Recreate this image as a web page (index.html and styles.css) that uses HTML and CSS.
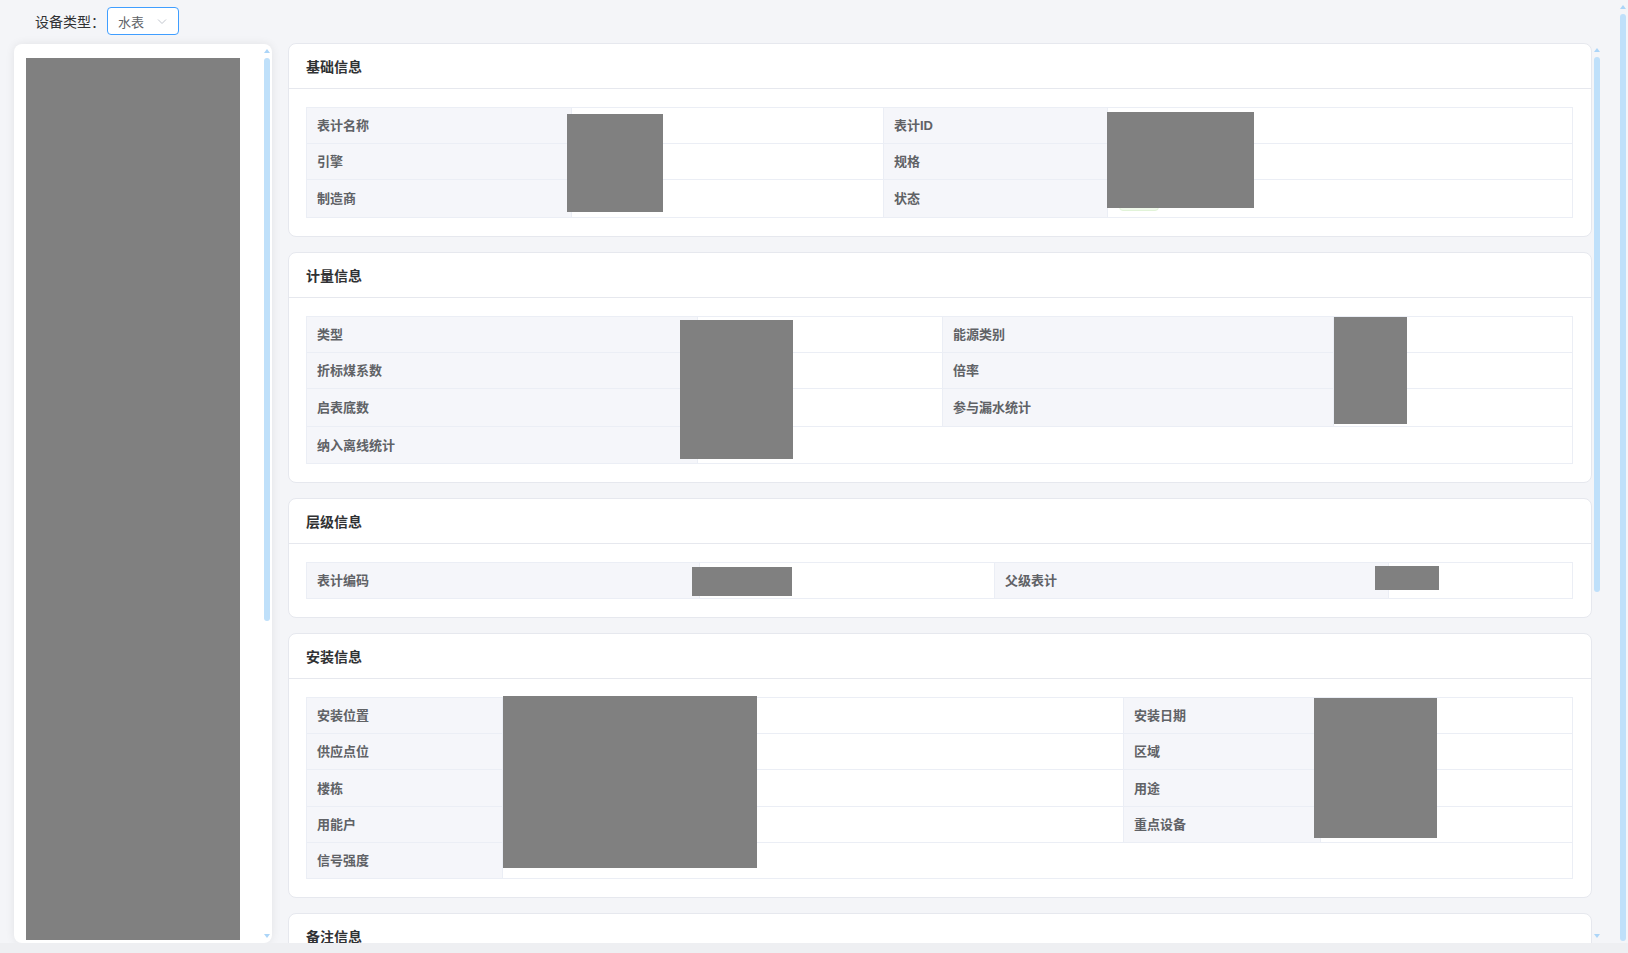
FILE: index.html
```html
<!DOCTYPE html>
<html lang="zh-CN">
<head>
<meta charset="utf-8">
<title>设备详情</title>
<link rel="stylesheet" href="styles.css">
</head>
<body>
<div class="app">
  <div class="page">
    <div class="toolbar">
      <span class="toolbar-label">设备类型：</span>
      <div class="select">
        <span class="select-value">水表</span>
        <svg class="select-arrow" width="10" height="6" viewBox="0 0 10 6"><polyline points="1,0.5 5,4.5 9,0.5" fill="none" stroke="#c0c4cc" stroke-width="1"/></svg>
      </div>
    </div>
    <div class="main">
      <aside class="tree-panel">
        <div class="tree">
          <div class="redact-block"></div>
        </div>
        <div class="scrollbar">
          <span class="sb-up"></span>
          <span class="sb-thumb thumb-tree"></span>
          <span class="sb-fill"></span>
          <span class="sb-down"></span>
        </div>
      </aside>
      <section class="content">
        <div class="cards">
          <div class="card">
            <div class="card-header">基础信息</div>
            <div class="card-body">
              <div class="desc desc-basic">
                <div class="label">表计名称</div><div class="value"></div>
                <div class="label">表计ID</div><div class="value"></div>
                <div class="label">引擎</div><div class="value"></div>
                <div class="label">规格</div><div class="value"></div>
                <div class="label">制造商</div><div class="value"></div>
                <div class="label">状态</div><div class="value"><span class="tag tag-success">正常</span></div>
              </div>
            </div>
            <div class="redact r-a"></div>
            <div class="redact r-b"></div>
          </div>

          <div class="card">
            <div class="card-header">计量信息</div>
            <div class="card-body">
              <div class="desc desc-measure">
                <div class="label">类型</div><div class="value"></div>
                <div class="label">能源类别</div><div class="value"></div>
                <div class="label">折标煤系数</div><div class="value"></div>
                <div class="label">倍率</div><div class="value"></div>
                <div class="label">启表底数</div><div class="value"></div>
                <div class="label">参与漏水统计</div><div class="value"></div>
                <div class="label">纳入离线统计</div><div class="value span3"></div>
              </div>
            </div>
            <div class="redact r-c"></div>
            <div class="redact r-d"></div>
          </div>

          <div class="card">
            <div class="card-header">层级信息</div>
            <div class="card-body">
              <div class="desc desc-level">
                <div class="label">表计编码</div><div class="value"></div>
                <div class="label">父级表计</div><div class="value"></div>
              </div>
            </div>
            <div class="redact r-e"></div>
            <div class="redact r-f"></div>
          </div>

          <div class="card">
            <div class="card-header">安装信息</div>
            <div class="card-body">
              <div class="desc desc-install">
                <div class="label">安装位置</div><div class="value"></div>
                <div class="label">安装日期</div><div class="value"></div>
                <div class="label">供应点位</div><div class="value"></div>
                <div class="label">区域</div><div class="value"></div>
                <div class="label">楼栋</div><div class="value"></div>
                <div class="label">用途</div><div class="value"></div>
                <div class="label">用能户</div><div class="value"></div>
                <div class="label">重点设备</div><div class="value"></div>
                <div class="label">信号强度</div><div class="value span3"></div>
              </div>
            </div>
            <div class="redact r-g"></div>
            <div class="redact r-h"></div>
          </div>

          <div class="card">
            <div class="card-header">备注信息</div>
            <div class="card-body">
              <div class="desc desc-remark">
                <div class="label">备注</div><div class="value"></div>
              </div>
            </div>
          </div>
        </div>
        <div class="scrollbar">
          <span class="sb-up"></span>
          <span class="sb-thumb thumb-content"></span>
          <span class="sb-fill"></span>
          <span class="sb-down"></span>
        </div>
      </section>
    </div>
  </div>
  <div class="scrollbar page-scrollbar">
    <span class="sb-up"></span>
    <span class="sb-thumb thumb-page"></span>
  </div>
</div>
</body>
</html>
```

FILE: styles.css
```css
html, body {
  margin: 0;
  padding: 0;
}

body {
  background: #eeeff2;
  overflow: hidden;
  font-family: "Liberation Sans", "Noto Sans CJK SC", sans-serif;
  color: #303133;
}

.app {
  height: 943px;
  display: flex;
  overflow: hidden;
  background: #f4f5f8;
}

.page {
  flex: 1;
  min-width: 0;
  padding: 0 16px 0 14px;
}

/* ---------- scrollbars (drawn) ---------- */
.scrollbar {
  width: 10px;
  flex: none;
  display: flex;
  flex-direction: column;
}
.sb-up,
.sb-down {
  display: block;
  height: 12px;
  flex: none;
}
.sb-up::before {
  content: "";
  display: block;
  width: 0;
  height: 0;
  margin: 5px auto 0;
  border-left: 3px solid transparent;
  border-right: 3px solid transparent;
  border-bottom: 4px solid #acd5f8;
}
.sb-down::before {
  content: "";
  display: block;
  width: 0;
  height: 0;
  margin: 3px auto 0;
  border-left: 3px solid transparent;
  border-right: 3px solid transparent;
  border-top: 4px solid #acd5f8;
}
.sb-thumb {
  display: block;
  flex: none;
  width: 6px;
  margin: 2px auto 0;
  border-radius: 3px;
  background: #bfe0fa;
}
.sb-fill {
  flex: 1;
}
.thumb-page { height: 927px; }
.thumb-tree { height: 563px; }
.thumb-content { height: 535px; }

.page-scrollbar {
  height: 943px;
}

/* ---------- toolbar ---------- */
.toolbar {
  display: flex;
  align-items: center;
  padding: 7px 0 0 21px;
  height: 28px;
  margin-bottom: 8px;
}
.toolbar-label {
  font-size: 14px;
  color: #303133;
  margin-right: 2px;
}
.select {
  width: 72px;
  height: 28px;
  box-sizing: border-box;
  border: 1px solid #409eff;
  border-radius: 4px;
  background: #fff;
  display: flex;
  align-items: center;
  justify-content: space-between;
  padding: 0 11px 0 10px;
}
.select-value {
  font-size: 13px;
  color: #606266;
}
.select-arrow {
  display: block;
  margin-top: 2px;
}

/* ---------- main layout ---------- */
.main {
  display: flex;
  gap: 16px;
  height: 900px;
}

.tree-panel {
  width: 258px;
  flex: none;
  height: 899px;
  margin-top: 1px;
  background: #fff;
  border-radius: 8px;
  box-shadow: 0 0 10px rgba(0, 0, 0, 0.08);
  overflow: hidden;
  display: flex;
}
.tree {
  flex: 1;
  padding: 14px 0 0 12px;
}
.redact-block {
  width: 214px;
  height: 882px;
  background: #808080;
}

.content {
  flex: 1;
  height: 900px;
  display: flex;
}
.cards {
  flex: 1;
  min-width: 0;
  height: 900px;
  overflow: hidden;
}

/* ---------- cards ---------- */
.card {
  position: relative;
  background: #fff;
  border: 1px solid #e6e8ee;
  border-radius: 8px;
  margin-bottom: 15px;
}
.card-header {
  height: 45px;
  box-sizing: border-box;
  border-bottom: 1px solid #e6e8ee;
  padding-left: 17px;
  display: flex;
  align-items: center;
  font-size: 14px;
  font-weight: 700;
  color: #303133;
}
.card-body {
  padding: 18px 18px 18px 17px;
}

/* ---------- descriptions table ---------- */
.desc {
  display: grid;
  border-top: 1px solid #ebeef5;
  border-left: 1px solid #ebeef5;
}
.desc > div {
  box-sizing: border-box;
  border-right: 1px solid #ebeef5;
  border-bottom: 1px solid #ebeef5;
  display: flex;
  align-items: center;
  padding: 0 10px 2px;
  font-size: 13px;
}
.desc .label {
  background: #f5f6fa;
  color: #606266;
  font-weight: 700;
}
.desc .value {
  background: #fff;
  color: #606266;
  padding: 0 10px 0 11px;
}
.desc .span3 {
  grid-column: span 3;
}

.desc-basic {
  grid-template-columns: 265px 312px 224px 1fr;
  grid-template-rows: 36px 36px 38px;
}
.desc-measure {
  grid-template-columns: 391px 245px 391px 1fr;
  grid-template-rows: 36px 36px 38px 37px;
}
.desc-level {
  grid-template-columns: 393px 295px 394px 1fr;
  grid-template-rows: 36px;
}
.desc-install {
  grid-template-columns: 196px 621px 197px 1fr;
  grid-template-rows: 36px 36px 37px 36px 36px;
}
.desc-remark {
  grid-template-columns: 196px 1fr;
  grid-template-rows: 36px;
}

.tag {
  display: inline-flex;
  align-items: center;
  height: 24px;
  box-sizing: border-box;
  padding: 0 7px;
  font-size: 12px;
  border-radius: 4px;
  font-weight: 400;
}
.tag-success {
  background: #f0f9eb;
  border: 1px solid #e1f3d8;
  color: #67c23a;
}

/* ---------- redaction overlays ---------- */
.redact {
  position: absolute;
  background: #808080;
}
.r-a { left: 278px; top: 70px; width: 96px; height: 98px; }
.r-b { left: 818px; top: 68px; width: 147px; height: 96px; }
.r-c { left: 391px; top: 67px; width: 113px; height: 139px; }
.r-d { left: 1045px; top: 64px; width: 73px; height: 107px; }
.r-e { left: 403px; top: 68px; width: 100px; height: 29px; }
.r-f { left: 1086px; top: 67px; width: 64px; height: 24px; }
.r-g { left: 214px; top: 62px; width: 254px; height: 172px; }
.r-h { left: 1025px; top: 64px; width: 123px; height: 140px; }
```
